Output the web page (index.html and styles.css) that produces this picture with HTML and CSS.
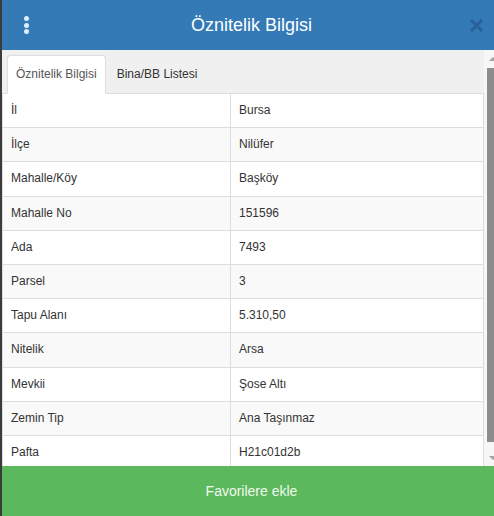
FILE: index.html
```html
<!DOCTYPE html>
<html lang="tr">
<head>
  <meta charset="UTF-8" />
  <meta name="viewport" content="width=device-width, initial-scale=1.0"/>
  <title>Öznitelik Bilgisi</title>
  <link rel="stylesheet" href="styles.css">
</head>
<body>
  <div class="panel">
    <div class="panel-header">
      <span class="menu-dots"><i></i><i></i><i></i></span>
      <h3 class="panel-title">Öznitelik Bilgisi</h3>
      <button class="close" type="button">
        <svg width="13" height="13" viewBox="0 0 13 13"><path d="M2 2 L11 11 M11 2 L2 11" stroke="currentColor" stroke-width="3" stroke-linecap="square"/></svg>
      </button>
    </div>

    <div class="panel-main">
      <div class="panel-body">
        <ul class="tabs">
          <li class="active"><a>Öznitelik Bilgisi</a></li>
          <li><a>Bina/BB Listesi</a></li>
        </ul>

        <table class="attr-table">
          <colgroup>
            <col class="col-key">
            <col>
          </colgroup>
          <tbody>
            <tr><td>İl</td><td>Bursa</td></tr>
            <tr><td>İlçe</td><td>Nilüfer</td></tr>
            <tr><td>Mahalle/Köy</td><td>Başköy</td></tr>
            <tr><td>Mahalle No</td><td>151596</td></tr>
            <tr><td>Ada</td><td>7493</td></tr>
            <tr><td>Parsel</td><td>3</td></tr>
            <tr><td>Tapu Alanı</td><td>5.310,50</td></tr>
            <tr><td>Nitelik</td><td>Arsa</td></tr>
            <tr><td>Mevkii</td><td>Şose Altı</td></tr>
            <tr><td>Zemin Tip</td><td>Ana Taşınmaz</td></tr>
            <tr><td>Pafta</td><td>H21c01d2b</td></tr>
          </tbody>
        </table>
      </div>

      <!-- scrollbar of the attribute list -->
      <div class="scrollbar">
        <span class="sb-btn sb-up"></span>
        <div class="sb-track"><div class="sb-thumb"></div></div>
        <span class="sb-btn sb-down"></span>
      </div>
    </div>

    <button class="fav-btn" type="button">Favorilere ekle</button>
  </div>
</body>
</html>
```

FILE: styles.css
```css
* {
  box-sizing: border-box;
  padding: 0;
  margin: 0;
  font-family: 'Liberation Sans', Arial, sans-serif;
}

body {
  background: #3b3b3b;
  height: 100vh;
  overflow: hidden;
}

.panel {
  margin-left: 2px;
  width: 499px;
  height: 516px;
  display: flex;
  flex-direction: column;
  background: #fff;
}

.panel-header {
  flex: 0 0 50px;
  background: #337ab7;
  display: grid;
  grid-template-columns: 48px 1fr 48px;
  align-items: center;
}

.menu-dots {
  display: flex;
  flex-direction: column;
  align-items: center;
  gap: 1.5px;
}

.menu-dots i {
  width: 5px;
  height: 5px;
  border-radius: 50%;
  background: #dcefff;
}

.panel-title {
  text-align: center;
  color: #fff;
  font-size: 18px;
  font-weight: normal;
}

.close {
  justify-self: end;
  margin-right: 18px;
  border: none;
  background: none;
  color: #29609a;
  display: flex;
  cursor: pointer;
}

.panel-main {
  flex: 1;
  min-height: 0;
  display: flex;
}

.panel-body {
  flex: 1;
  min-width: 0;
  overflow: hidden;
}

.scrollbar {
  flex: 0 0 17px;
  display: flex;
  flex-direction: column;
  background: #f6f6f6;
}

.sb-btn {
  flex: 0 0 17px;
  display: flex;
  justify-content: center;
  align-items: center;
}

.sb-btn::before {
  content: "";
  border-left: 4px solid transparent;
  border-right: 4px solid transparent;
}

.sb-up::before {
  border-bottom: 4px solid #a3a3a3;
}

.sb-down::before {
  border-top: 4px solid #a3a3a3;
}

.sb-track {
  flex: 1;
  padding: 1px 3px 0;
}

.sb-thumb {
  height: 374px;
  background: #8d8d8d;
}

.tabs {
  list-style: none;
  display: flex;
  background: #f0f0f0;
  padding: 5px 0 0 5px;
  border-bottom: 1px solid #ddd;
}

.tabs li {
  margin-bottom: -1px;
  margin-right: 2px;
}

.tabs a {
  display: block;
  padding: 10px 8px;
  font-size: 12px;
  line-height: 17px;
  color: #333;
  border: 1px solid transparent;
  border-radius: 4px 4px 0 0;
  cursor: pointer;
}

.tabs li.active a {
  background: #fff;
  color: #555;
  border-color: #ddd #ddd transparent;
}

.attr-table {
  width: 100%;
  border-collapse: collapse;
  table-layout: fixed;
  font-size: 12px;
  color: #333;
}

.col-key {
  width: 228px;
}

.attr-table td {
  padding: 8px;
  line-height: 17.2px;
  border: 1px solid #ddd;
  border-top: none;
}

.attr-table tr:nth-child(even) {
  background: #f9f9f9;
}

.fav-btn {
  flex: 0 0 50px;
  border: none;
  background: #5cb85c;
  color: #f0f9f0;
  font-size: 14px;
  cursor: pointer;
}
```
